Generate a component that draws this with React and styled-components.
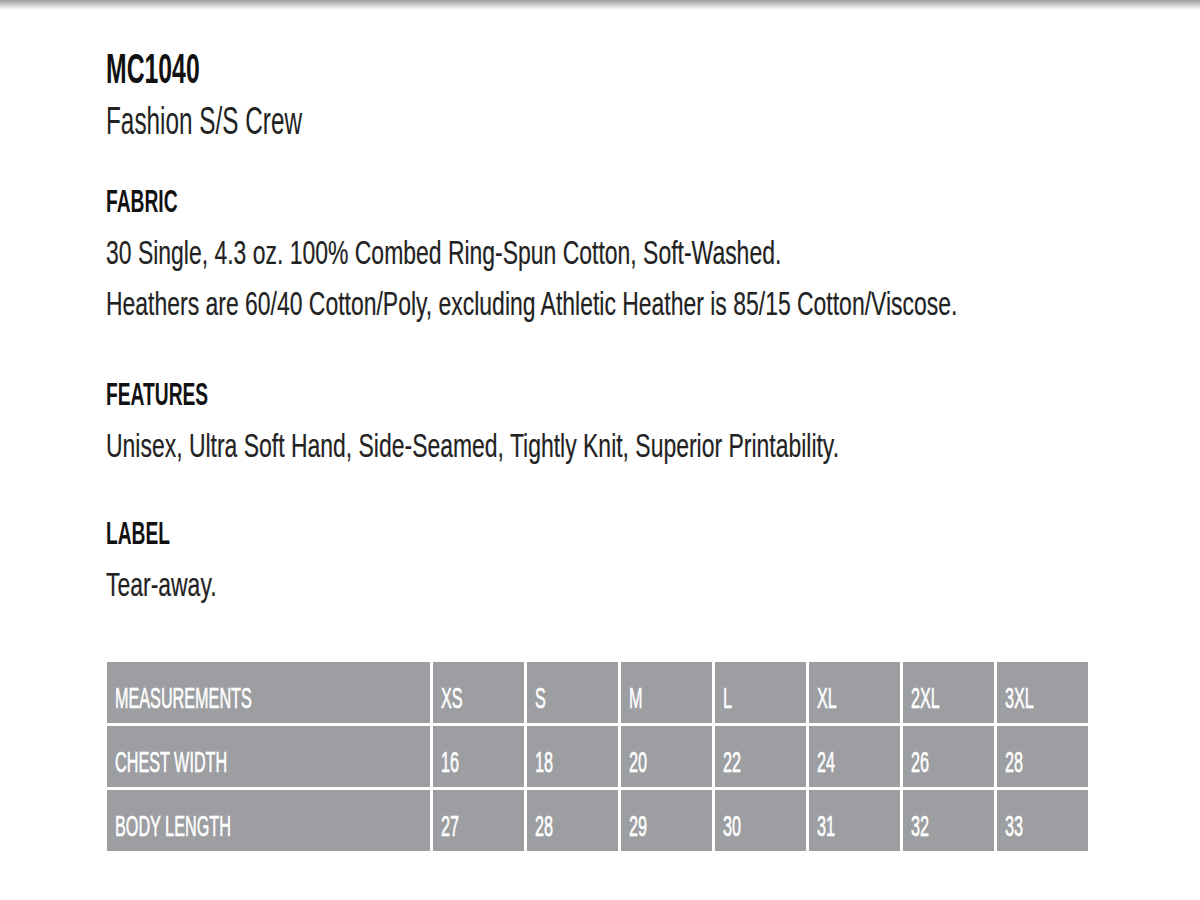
import React from "react";
import styled, { createGlobalStyle } from "styled-components";

const GlobalStyle = createGlobalStyle`
  html, body {
    margin: 0;
    padding: 0;
    background: #ffffff;
  }
  body {
    font-family: "Liberation Sans", Arial, sans-serif;
    color: #1b1b1b;
  }
`;

const Page = styled.div`
  width: 1200px;
  min-height: 900px;
  overflow: hidden;
`;

const TopShade = styled.div`
  height: 10px;
  background: linear-gradient(to bottom, #9a9a9a 0%, #c6c6c6 40%, #ffffff 100%);
`;

const Content = styled.div`
  padding: 34px 0 0 106px;
`;

// condensed look: each line squeezed horizontally from its left edge
const Squeezed = styled.div`
  transform: scaleX(${(p) => p.$sx});
  transform-origin: left top;
  white-space: nowrap;
`;

const Code = styled(Squeezed)`
  font-size: 42px;
  font-weight: bold;
  line-height: 50px;
  color: #111;
`;

const Subtitle = styled(Squeezed)`
  font-size: 38px;
  line-height: 50px;
  margin-top: 2px;
  color: #222;
`;

const Section = styled.div`
  margin-top: ${(p) => p.$top}px;
`;

const Heading = styled(Squeezed)`
  font-size: 31px;
  font-weight: bold;
  line-height: 50px;
  color: #111;
`;

const Body = styled(Squeezed)`
  font-size: 34px;
  line-height: 51px;
  color: #222;
  -webkit-text-stroke: 0.2px #222;
`;

const SizeTable = styled.div`
  display: grid;
  grid-template-columns: 323px repeat(7, 91px);
  grid-auto-rows: 61px;
  gap: 3px;
  margin: 52px 0 0 1px;
  width: 981px;
`;

const Cell = styled.div`
  background: #9c9ea1;
  padding: 11px 0 0 8px;
  line-height: 50px;
  font-size: 30px;
  color: #ffffff;
  white-space: nowrap;
  overflow: hidden;
`;

const CellText = styled.span`
  display: inline-block;
  transform: scaleX(0.54);
  transform-origin: left center;
  -webkit-text-stroke: 0.6px #ffffff;
`;

const sections = [
  {
    title: "FABRIC",
    top: 31,
    lines: [
      "30 Single, 4.3 oz. 100% Combed Ring-Spun Cotton, Soft-Washed.",
      "Heathers are 60/40 Cotton/Poly, excluding Athletic Heather is 85/15 Cotton/Viscose.",
    ],
  },
  {
    title: "FEATURES",
    top: 41,
    lines: ["Unisex, Ultra Soft Hand, Side-Seamed, Tightly Knit, Superior Printability."],
  },
  {
    title: "LABEL",
    top: 38,
    lines: ["Tear-away."],
  },
];

const rows = [
  ["MEASUREMENTS", "XS", "S", "M", "L", "XL", "2XL", "3XL"],
  ["CHEST WIDTH", "16", "18", "20", "22", "24", "26", "28"],
  ["BODY LENGTH", "27", "28", "29", "30", "31", "32", "33"],
];

export default function App() {
  return (
    <Page>
      <GlobalStyle />
      <TopShade />
      <Content>
        <Code $sx={0.59}>MC1040</Code>
        <Subtitle $sx={0.64}>Fashion S/S Crew</Subtitle>
        {sections.map((s) => (
          <Section key={s.title} $top={s.top}>
            <Heading $sx={0.62}>{s.title}</Heading>
            {s.lines.map((l) => (
              <Body key={l} $sx={0.675}>
                {l}
              </Body>
            ))}
          </Section>
        ))}
        <SizeTable>
          {rows.map((r) =>
            r.map((c, i) => (
              <Cell key={r[0] + i}>
                <CellText>{c}</CellText>
              </Cell>
            ))
          )}
        </SizeTable>
      </Content>
    </Page>
  );
}
